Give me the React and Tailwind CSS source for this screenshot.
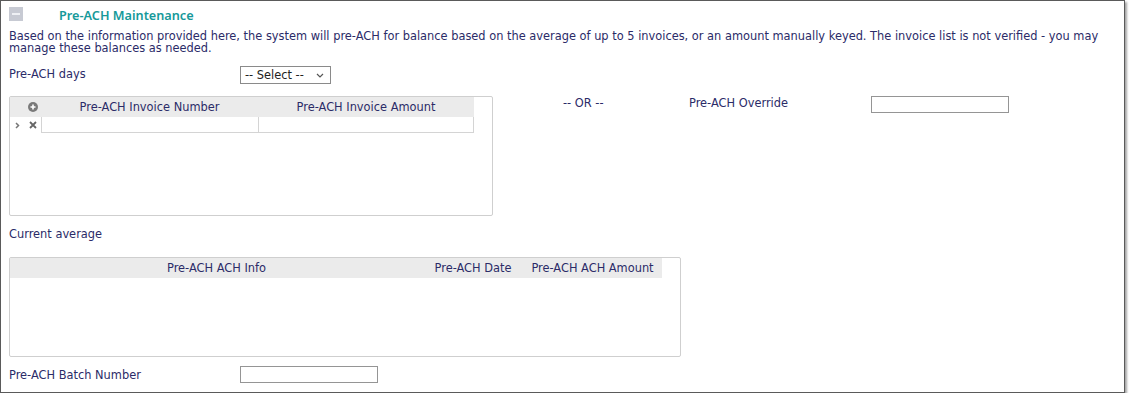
import React from "react";

const font = { fontFamily: '"DejaVu Sans", Verdana, sans-serif' };

function PlusCircle() {
  return (
    <svg width="10" height="10" viewBox="0 0 10 10">
      <circle cx="5" cy="5" r="5" fill="#7a7a7a" />
      <path d="M5 2.5v5M2.5 5h5" stroke="#fff" strokeWidth="1.6" />
    </svg>
  );
}

function Chevron() {
  return (
    <svg width="5" height="7" viewBox="0 0 5 7">
      <path d="M1 1l2.5 2.5L1 6" stroke="#777" strokeWidth="1.5" fill="none" />
    </svg>
  );
}

function Cross() {
  return (
    <svg width="8" height="8" viewBox="0 0 8 8">
      <path d="M1 1l6 6M7 1l-6 6" stroke="#666" strokeWidth="1.8" />
    </svg>
  );
}

function SelectBox() {
  return (
    <div className="flex h-[18px] w-[91px] items-center justify-between border border-[#8a8a8a] bg-white pl-[4px] pr-[6px] text-[#222]">
      <span>-- Select --</span>
      <svg width="8" height="5" viewBox="0 0 8 5">
        <path d="M1 1l3 3 3-3" stroke="#555" strokeWidth="1.2" fill="none" />
      </svg>
    </div>
  );
}

function TextBox({ w }) {
  return <div className={`h-[17px] ${w} border border-[#959595] bg-white`} />;
}

export default function App() {
  return (
    <div className="bg-white p-0" style={font}>
      <div className="h-[393px] w-[1125px] border border-[#5a5a5a] bg-white pl-[8px] text-[11.4px] leading-[12px] text-[#2b2b68] shadow-[2px_2px_2px_rgba(0,0,0,0.35)]">
        {/* header */}
        <div className="mt-[6px] flex h-[14px] items-center">
          <div className="flex h-[14px] w-[14px] items-center justify-center bg-[#c7cad3]">
            <div className="h-[2px] w-[8px] bg-[#eef0f4]" />
          </div>
          <div className="ml-[36px] mt-[1px] font-['Noto_Sans',sans-serif] text-[12.7px] font-semibold text-[#16999a]">
            Pre-ACH Maintenance
          </div>
        </div>

        <p className="mt-[9px] w-[1112px]">
          Based on the information provided here, the system will pre-ACH for balance based on the average of up to 5 invoices, or an amount manually keyed. The invoice list is not verified - you may manage these balances as needed.
        </p>

        <div className="mt-[12px] flex items-start">
          <div className="mt-[2px] w-[231px]">Pre-ACH days</div>
          <SelectBox />
        </div>

        <div className="mt-[12px] flex items-start">
          <div className="h-[120px] w-[484px] rounded-[2px] border border-[#cfcfcf] pr-[18px]">
            <div className="flex h-[20px] items-center bg-[#ebebeb]">
              <div className="flex w-[31px] justify-end pr-[3px]">
                <PlusCircle />
              </div>
              <div className="w-[217px] text-center">Pre-ACH Invoice Number</div>
              <div className="flex-1 text-center">Pre-ACH Invoice Amount</div>
            </div>
            <div className="flex h-[16px] items-center">
              <div className="flex w-[31px] items-center justify-between pl-[5px] pr-[4px]">
                <Chevron />
                <Cross />
              </div>
              <div className="h-[16px] w-[217px] border-b border-l border-[#d4d4d4]" />
              <div className="h-[16px] flex-1 border-x border-b border-[#d4d4d4]" />
            </div>
          </div>
          <div className="ml-[70px] flex items-start">
            <span className="mt-[1px] w-[126px]">-- OR --</span>
            <span className="mt-[1px] w-[182px]">Pre-ACH Override</span>
            <TextBox w="w-[138px]" />
          </div>
        </div>

        <div className="mt-[12px]">Current average</div>

        <div className="mt-[17px] h-[100px] w-[672px] rounded-[2px] border border-[#cfcfcf] pr-[18px]">
          <div className="flex h-[20px] items-center bg-[#ebebeb]">
            <div className="w-[413px] text-center">Pre-ACH ACH Info</div>
            <div className="w-[100px] text-center">Pre-ACH Date</div>
            <div className="flex-1 text-center">Pre-ACH ACH Amount</div>
          </div>
        </div>

        <div className="mt-[9px] flex items-center">
          <div className="w-[231px]">Pre-ACH Batch Number</div>
          <TextBox w="w-[138px]" />
        </div>
      </div>
    </div>
  );
}
